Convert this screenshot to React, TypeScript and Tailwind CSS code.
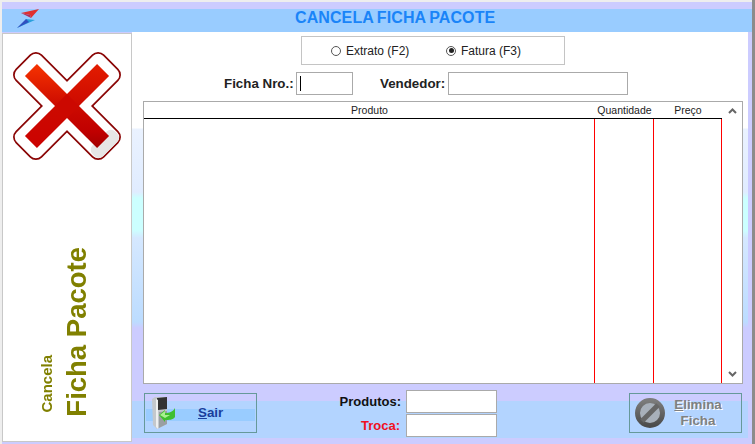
const arial = "font-['Liberation_Sans',Arial,sans-serif]";

function Logo() {
  return (
    <svg width="24" height="20" viewBox="0 0 24 20" className="ml-[15px]">
      <path d="M4 4 L22 0 L14 9 L13 6 Z" fill="#e03030" />
      <path d="M4 4 L13 6 L14 9 Z" fill="#b03060" />
      <path d="M9 10 L18 11 L0 19 L8 13 Z" fill="#2aa0dc" />
      <path d="M9 10 L12 13 L0 19 Z" fill="#3050c0" />
    </svg>
  );
}

function BigX() {
  return (
    <svg width="108" height="108" viewBox="-54 -54 108 108">
      <defs>
        <linearGradient id="a" gradientUnits="userSpaceOnUse" x1="-36" y1="-36" x2="36" y2="36">
          <stop offset="0" stopColor="#ff3c00" />
          <stop offset="0.5" stopColor="#cc0a00" />
          <stop offset="0.75" stopColor="#c00000" />
          <stop offset="1" stopColor="#930000" />
        </linearGradient>
        <linearGradient id="b" gradientUnits="userSpaceOnUse" x1="-36" y1="36" x2="36" y2="-36">
          <stop offset="0" stopColor="#e82000" />
          <stop offset="0.5" stopColor="#cc0a00" />
          <stop offset="1" stopColor="#cc0000" />
        </linearGradient>
      </defs>
      <g transform="rotate(45)">
        <rect x="-62" y="-18" width="124" height="36" rx="8" fill="#8a0505" stroke="#8a0505" strokeWidth="1.4" />
        <rect x="-62" y="-18" width="124" height="36" rx="8" fill="#8a0505" stroke="#8a0505" strokeWidth="1.4" transform="rotate(90)" />
        <rect x="-61" y="-17" width="122" height="34" rx="7" fill="#fff" />
        <rect x="-61" y="-17" width="122" height="34" rx="7" fill="#fff" transform="rotate(90)" />
        <rect x="46" y="-16" width="15" height="32" rx="6" fill="#e6e6e6" />
        <rect x="-51" y="-8.5" width="102" height="17" fill="url(#a)" />
        <rect x="-51" y="-8.5" width="102" height="17" fill="url(#b)" transform="rotate(90)" />
        <rect x="-8.5" y="-8.5" width="17" height="17" fill="#cc0800" />
      </g>
    </svg>
  );
}

function DoorIcon() {
  return (
    <svg width="26" height="34" viewBox="0 0 26 34">
      <path d="M1 3 L4 1 L16 1 L16 28 L6 33 L2 29 Z" fill="#c4c8cc" />
      <path d="M6 2 L16 1 L16 13 L7 14 Z" fill="#333333" />
      <path d="M5 3 L7 4 L7 33 L5 31 Z" fill="#eef0f0" />
      <path d="M8 16 L16 15 L16 28 L8 32 Z" fill="#9a9fa3" />
      <g transform="translate(0 2)">
        <path d="M8 17 L14 12 L14 15 C18 15 22 14 24 10 L24 19 C22 22 18 22 14 22 L14 24 Z" fill="#3fbf30" />
        <path d="M9 17 L14 13 L14 17 L19 17 L14 20 Z" fill="#a8f090" />
      </g>
    </svg>
  );
}

function BlockIcon() {
  return (
    <svg width="32" height="32" viewBox="0 0 32 32">
      <defs>
        <linearGradient id="c" x1="0" y1="0" x2="0" y2="1">
          <stop offset="0" stopColor="#7c7c7c" />
          <stop offset="1" stopColor="#4c4c4c" />
        </linearGradient>
      </defs>
      <circle cx="16" cy="16" r="12.5" fill="#a8b0ba" stroke="url(#c)" strokeWidth="5" />
      <path d="M8 24 L24 8" stroke="#666" strokeWidth="5" />
    </svg>
  );
}

function Radio({ checked, label }: { checked?: boolean; label: string }) {
  return (
    <div className="flex items-center gap-[5px]">
      <span className="flex h-[10px] w-[10px] items-center justify-center rounded-full border-[1.5px] border-[#555] bg-white">
        {checked && <span className="h-[5px] w-[5px] rounded-full bg-[#222]" />}
      </span>
      <span className="text-[12px] leading-none text-[#222]">{label}</span>
    </div>
  );
}

function Chevron({ down }: { down?: boolean }) {
  return (
    <svg width="9" height="6" viewBox="0 0 9 6">
      <path d={down ? "M1 1 L4.5 4.5 L8 1" : "M1 5 L4.5 1.5 L8 5"} fill="none" stroke="#666" strokeWidth="2" />
    </svg>
  );
}

export default function App() {
  return (
    <div className={`${arial} flex h-[444px] w-[755px] flex-col overflow-hidden border-l-2 border-r-[3px] border-l-[#eeeeee] border-r-[#8c8c8c] bg-[#ccccff]`}>
      {/* title bar */}
      <div className="h-[2px] shrink-0 bg-[#eeeeee]" />
      <div className="h-[7px] shrink-0 bg-[#ccccff]" />
      <div className="flex h-[23px] shrink-0 items-start bg-[#99ccff]">
        <Logo />
        <div className="ml-[254px] mt-[1px] text-[16px] font-bold leading-[16px] tracking-[0.1px] text-[#1a84f8] [word-spacing:-1px]">
          CANCELA FICHA PACOTE
        </div>
      </div>

      <div className="flex min-h-0 flex-1">
        {/* left panel */}
        <div className="mb-[2px] mt-px flex w-[130px] shrink-0 flex-col border border-[#c8c8c8] bg-white">
          <div className="ml-[10px] mt-[18px]">
            <BigX />
          </div>
          <div className="ml-[35px] mt-auto mb-[24px] flex items-end gap-[7px]">
            <span className="mb-[4px] text-[15px] font-bold leading-[17px] text-[#808000] rotate-180 [writing-mode:vertical-rl]">
              Cancela
            </span>
            <span className="text-[27.5px] font-bold leading-[30px] text-[#808000] rotate-180 [writing-mode:vertical-rl]">
              Ficha Pacote
            </span>
          </div>
        </div>

        {/* main area */}
        <div className="mb-[6px] flex w-[616px] flex-col bg-[linear-gradient(to_bottom,#ffffff_0,#ffffff_96px,#eaf2ff_97px,#e0ecff_160px,#ccffff_166px,#ccffff_198px,#d5e8ff_206px,#bcdcff_290px,#ccccff_296px,#ccccff_369px,#b3d4ff_369px,#b3d4ff_406px)] pl-[11px] pr-[5px]">
          <div className="ml-[158px] mt-[4px] flex h-[29px] w-[264px] shrink-0 items-center border border-[#c4c4c4] bg-white pl-[29px]">
            <div className="w-[115px]">
              <Radio label="Extrato (F2)" />
            </div>
            <Radio checked label="Fatura (F3)" />
          </div>

          <div className="mt-[7px] flex h-[23px] shrink-0 items-center whitespace-nowrap text-[13.33px] font-bold text-[#222]">
            <span className="ml-[81px] w-[72px] pt-px">Ficha Nro.:</span>
            <div className="flex h-full w-[57px] items-center border border-[#aaaaaa] bg-white pl-[3px]">
              <span className="h-[15px] w-px bg-black" />
            </div>
            <span className="ml-[27px] w-[68px] pt-px">Vendedor:</span>
            <div className="h-full w-[180px] border border-[#aaaaaa] bg-white" />
          </div>

          {/* table */}
          <div className="mt-[6px] flex h-[283px] w-[600px] shrink-0 border border-[#aaaaaa] bg-white">
            <div className="flex w-[578px] flex-col">
              <div className="flex h-[17px] shrink-0 items-center border-b border-black text-center text-[10.5px] leading-none text-[#222]">
                <div className="w-[451px]">Produto</div>
                <div className="w-[59px] whitespace-nowrap">Quantidade</div>
                <div className="w-[68px]">Preço</div>
              </div>
              <div className="flex min-h-0 flex-1">
                <div className="w-[451px] border-r border-[#ff0000]" />
                <div className="w-[59px] border-r border-[#ff0000]" />
                <div className="w-[68px] border-r border-[#ff0000]" />
              </div>
            </div>
            <div className="flex flex-1 flex-col items-center justify-between py-[6px]">
              <Chevron />
              <Chevron down />
            </div>
          </div>

          {/* bottom */}
          <div className="mt-[6px] flex items-start">
            <div className="relative ml-px mt-[3px] flex h-[40px] w-[113px] items-center border border-[#669999] pl-[6px]">
              <div className="absolute inset-x-[1px] top-[15px] h-[12px] bg-[#99ccff]" />
              <div className="relative">
                <DoorIcon />
              </div>
              <span className="relative ml-[21px] text-[13.33px] font-bold leading-none text-[#1a3f9c]">
                <span className="underline">S</span>air
              </span>
            </div>
            <div className="ml-[80px] flex flex-col gap-px text-[13px] font-bold leading-none">
              <div className="flex h-[23px] items-center">
                <span className="w-[64px] text-right text-[#111]">Produtos:</span>
                <div className="ml-[5px] h-[23px] w-[91px] border border-[#aaaaaa] bg-white" />
              </div>
              <div className="flex h-[23px] items-center">
                <span className="w-[63px] text-right text-[#f01020]">Troca:</span>
                <div className="ml-[6px] h-[23px] w-[91px] border border-[#aaaaaa] bg-white" />
              </div>
            </div>
            <div className="ml-[132px] mt-[3px] flex h-[40px] w-[113px] items-center border border-[#669999] pl-[4px]">
              <BlockIcon />
              <div className="-mt-px ml-[3px] flex-1 pr-[14px] text-center text-[13.33px] font-bold leading-[16px] text-[#808080] [text-shadow:1px_1px_0_#fff]">
                <span className="underline">E</span>limina
                <br />
                Ficha
              </div>
            </div>
          </div>
        </div>
      </div>
    </div>
  );
}
